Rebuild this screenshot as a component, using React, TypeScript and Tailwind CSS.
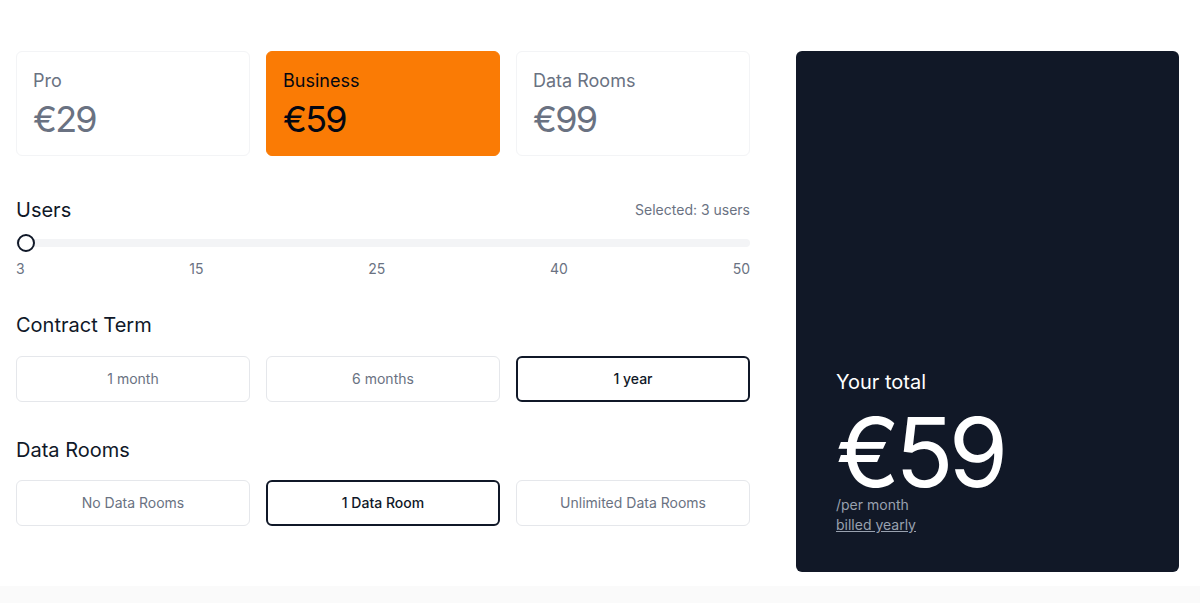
import React from "react";

const plans = [
  { name: "Pro", price: "€29" },
  { name: "Business", price: "€59", active: true },
  { name: "Data Rooms", price: "€99" },
];

const terms = [
  { label: "1 month" },
  { label: "6 months" },
  { label: "1 year", active: true },
];

const rooms = [
  { label: "No Data Rooms" },
  { label: "1 Data Room", active: true },
  { label: "Unlimited Data Rooms" },
];

function Option({ label, active }: { label: string; active?: boolean }) {
  return (
    <button
      className={
        active
          ? "h-[46px] rounded-md border-2 border-gray-900 bg-white text-sm font-medium text-gray-900"
          : "h-[46px] rounded-md border border-gray-200 bg-white text-sm text-gray-500"
      }
    >
      {label}
    </button>
  );
}

export default function App() {
  return (
    <div className="min-h-screen bg-white font-['Inter',sans-serif] text-gray-900">
      <section className="flex gap-[46px] pl-4 pt-[51px] pb-[14px]">
        {/* left column */}
        <div className="w-[734px]">
          <div className="grid grid-cols-3 gap-4">
            {plans.map((p) => (
              <div
                key={p.name}
                className={
                  p.active
                    ? "h-[105px] rounded-md border border-[#fa7b05] bg-[#fa7b05] px-4 pt-[15px] text-gray-950"
                    : "h-[105px] rounded-md border border-gray-100 bg-white px-4 pt-[15px] text-gray-500"
                }
              >
                <p className="text-lg leading-7">{p.name}</p>
                <p className="mt-1 text-4xl leading-10 tracking-tighter">{p.price}</p>
              </div>
            ))}
          </div>

          <div className="mt-10 flex items-center justify-between">
            <h2 className="text-xl leading-7">Users</h2>
            <span className="text-sm text-gray-500">Selected: 3 users</span>
          </div>
          <div className="relative mt-2.5 flex h-[18px] items-center">
            <div className="h-2 w-full rounded-full bg-gray-100" />
            <div className="absolute left-px top-0 h-[18px] w-[18px] rounded-full border-2 border-gray-900 bg-white" />
          </div>
          <div className="mt-[7px] flex justify-between text-sm text-gray-500">
            <span>3</span>
            <span>15</span>
            <span>25</span>
            <span>40</span>
            <span>50</span>
          </div>

          <h2 className="mt-8 text-xl leading-7">Contract Term</h2>
          <div className="mt-[17px] grid grid-cols-3 gap-4">
            {terms.map((t) => (
              <Option key={t.label} {...t} />
            ))}
          </div>

          <h2 className="mt-[34px] text-xl leading-7">Data Rooms</h2>
          <div className="mt-4 grid grid-cols-3 gap-4">
            {rooms.map((r) => (
              <Option key={r.label} {...r} />
            ))}
          </div>
        </div>

        {/* total panel */}
        <div className="flex h-[521px] w-[383px] flex-col justify-end rounded-md bg-[#111827] px-10 pb-[37px]">
          <p className="text-xl leading-7 text-white">Your total</p>
          <p className="mt-[14px] text-8xl leading-[84px] tracking-tighter text-white">€59</p>
          <p className="mt-px text-sm text-gray-400">/per month</p>
          <p className="text-sm text-gray-400 underline">billed yearly</p>
        </div>
      </section>
      <div className="h-[40px] bg-[#fafafa]" />
    </div>
  );
}
